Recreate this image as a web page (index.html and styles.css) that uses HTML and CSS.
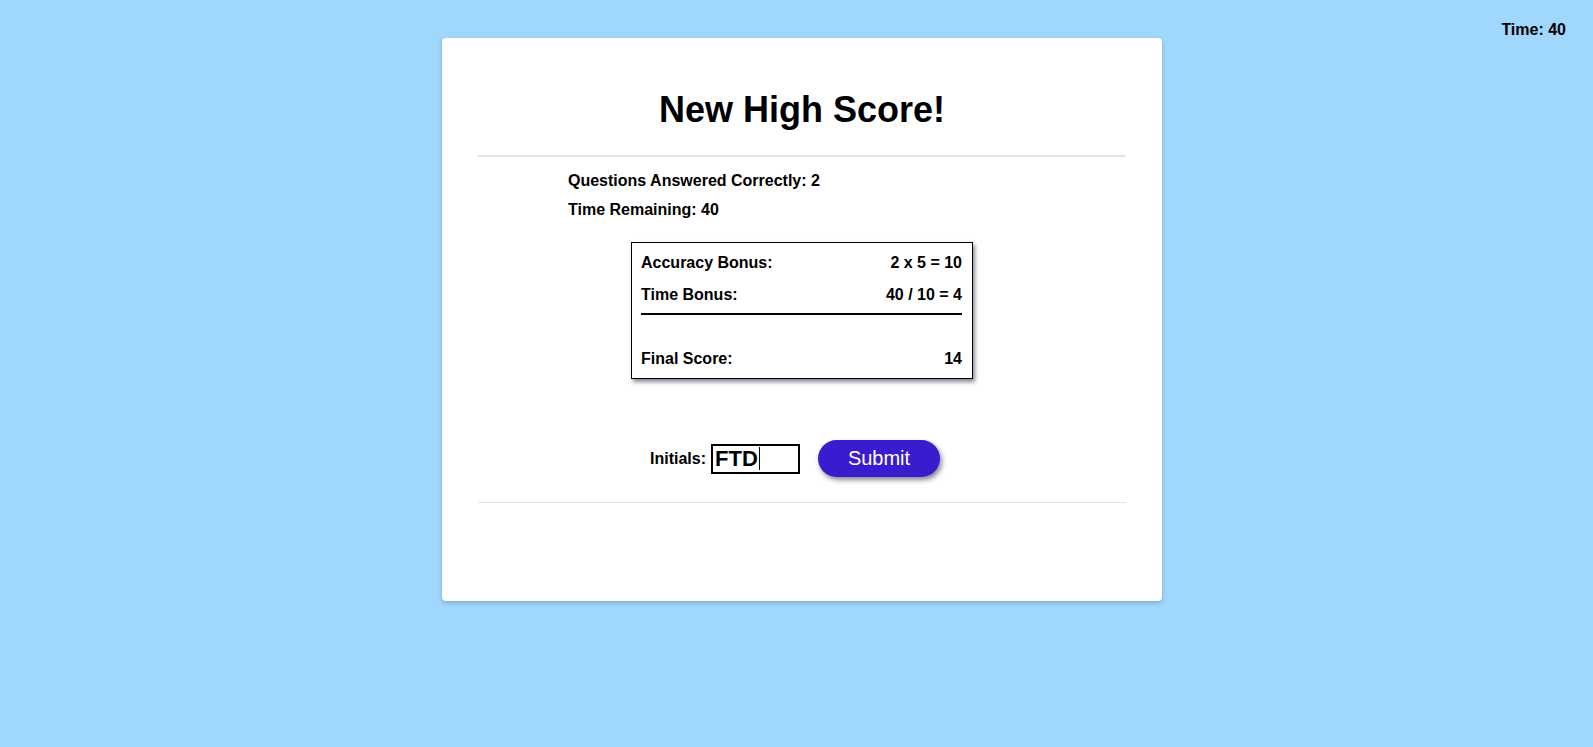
FILE: index.html
```html
<!DOCTYPE html>
<html lang="en">
<head>
<meta charset="utf-8">
<title>New High Score</title>
<link rel="stylesheet" href="styles.css">
</head>
<body>
  <div class="timer">Time: 40</div>
  <main class="stage">
    <section class="card">
      <h1 class="title">New High Score!</h1>
      <div class="divider"></div>
      <div class="stats">
        <p class="stat">Questions Answered Correctly: 2</p>
        <p class="stat">Time Remaining: 40</p>
      </div>
      <div class="score-box">
        <div class="score-row"><span>Accuracy Bonus:</span><span>2 x 5 = 10</span></div>
        <div class="score-row"><span>Time Bonus:</span><span>40 / 10 = 4</span></div>
        <div class="score-rule"></div>
        <div class="score-row"><span>Final Score:</span><span>14</span></div>
      </div>
      <form class="initials-row">
        <label class="initials-label" for="initials">Initials:</label>
        <div class="initials-input" id="initials">FTD<span class="caret"></span></div>
        <button class="submit-btn" type="button">Submit</button>
      </form>
      <div class="divider divider-light"></div>
    </section>
  </main>
</body>
</html>
```
FILE: styles.css
```css
* {
  box-sizing: border-box;
}

html, body {
  margin: 0;
  padding: 0;
}

body {
  background: #a0d7fd;
  font-family: "Liberation Sans", Arial, sans-serif;
  color: #000;
  min-height: 747px;
  position: relative;
}

.timer {
  position: absolute;
  top: 21px;
  right: 27px;
  font-size: 16px;
  font-weight: bold;
  line-height: 18px;
}

.stage {
  display: flex;
  justify-content: center;
  padding-left: 11px;
  padding-top: 38px;
}

.card {
  width: 720px;
  height: 563px;
  background: #fff;
  border-radius: 4px;
  box-shadow: 0 2px 4px rgba(60, 90, 120, 0.35);
  padding: 0 36px;
}

.title {
  margin: 51px 0 0;
  font-size: 36px;
  line-height: 41px;
  font-weight: bold;
  text-align: center;
}

.divider {
  margin-top: 25px;
  height: 2px;
  background: #e1e5e9;
}

.divider-light {
  height: 1px;
  background: #e4e4e4;
}

.stats {
  margin-top: 9px;
  padding-left: 90px;
}

.stat {
  margin: 0;
  font-size: 16px;
  font-weight: bold;
  line-height: 29px;
}

.score-box {
  width: 342px;
  margin: 18px auto 0;
  border: 1px solid #000;
  padding: 4px 10px 3px 9px;
  box-shadow: 2px 3px 4px rgba(50, 60, 80, 0.6);
}

.score-row {
  display: flex;
  justify-content: space-between;
  font-size: 16px;
  font-weight: bold;
  line-height: 32px;
}

.score-rule {
  height: 2px;
  background: #000;
  margin: 2px 0 28px;
}

.initials-row {
  margin: 61px 0 0;
  display: flex;
  justify-content: center;
  align-items: center;
  height: 37px;
  padding-right: 14px;
}

.initials-label {
  font-size: 16px;
  font-weight: bold;
  margin-right: 5px;
}

.initials-input {
  width: 89px;
  height: 30px;
  border: 2px solid #000;
  font-size: 22px;
  font-weight: bold;
  line-height: 26px;
  padding-left: 2px;
  display: flex;
  align-items: center;
}

.caret {
  display: inline-block;
  width: 1px;
  height: 23px;
  background: #000;
  margin-left: 1px;
}

.submit-btn {
  margin-left: 18px;
  width: 122px;
  height: 37px;
  border: none;
  border-radius: 19px;
  background: #3a1bce;
  color: #fff;
  font-family: "Liberation Sans", Arial, sans-serif;
  font-size: 20px;
  padding: 0;
  box-shadow: 2px 3px 5px rgba(30, 40, 60, 0.55);
}
```
